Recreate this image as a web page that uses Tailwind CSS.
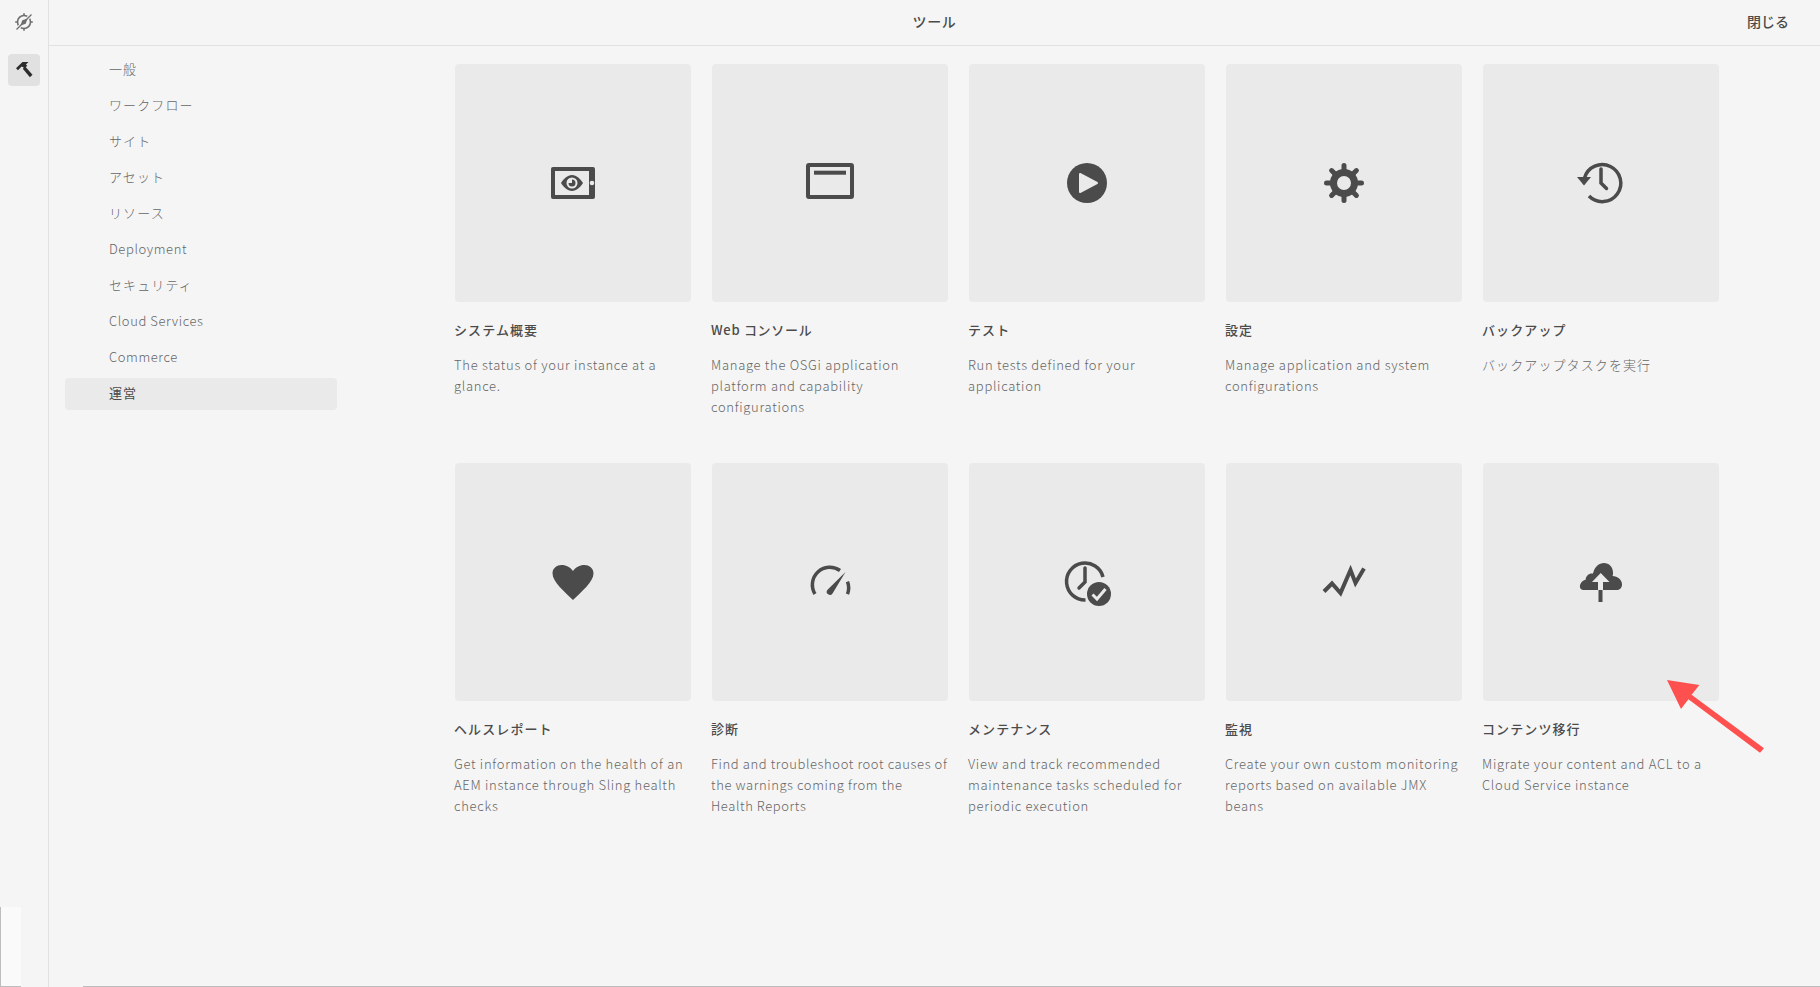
<!DOCTYPE html>
<html lang="ja">
  <head>
    <meta charset="UTF-8" />
    <script src="https://cdn.jsdelivr.net/npm/@tailwindcss/browser@4"></script>
    <title>ツール</title>
  </head>
  <body class="bg-[#f5f5f5] font-['Noto_Sans_CJK_JP',sans-serif] text-[#4b4b4b] overflow-hidden">
    <div class="relative flex h-[987px] w-[1820px] overflow-hidden">
      <!-- left rail -->
      <aside class="flex w-[49px] shrink-0 flex-col items-center border-r border-[#e1e1e1]">
        <div class="flex h-[46px] w-full items-center justify-center pb-[2px] text-[#6e6e6e]">
          <svg class="h-5 w-5" viewBox="0 0 20 20" fill="none" stroke="currentColor">
            <circle cx="10" cy="10" r="6.500" stroke-width="1.600" />
            <path d="M10 1.200v2M10 16.800v2M1.200 10h2M16.800 10h2" stroke-width="1.600" />
            <path d="M3.500 16.500L16.500 3.500" stroke="#f5f5f5" stroke-width="3.400" />
            <path d="M2.500 17.500L17.500 2.500" stroke-width="1.300" />
            <path d="M6.500 13.500l1.800-5.200 5.200-1.800-1.800 5.200z" fill="currentColor" stroke="none" />
          </svg>
        </div>
        <button class="mt-2 flex h-8 w-8 items-center justify-center rounded bg-[#e1e1e1] text-[#2c2c2c]">
          <svg class="h-[18px] w-[18px]" viewBox="0 0 18 18" fill="currentColor">
            <path d="M1 7.200L7.500 1h6l-2.600 2.500 1.300 1.300-2.700 2.700-1.300-1.300-1.600-.6-3.600 3.700z" />
            <path d="M7.800 7.800l2.400-2.400 7.300 8.300-2.600 2.500z" />
          </svg>
        </button>
      </aside>

      <div class="flex min-w-0 flex-1 flex-col">
        <!-- title bar -->
        <header class="grid h-[46px] shrink-0 grid-cols-[1fr_auto_1fr] items-center border-b border-[#e1e1e1] pb-[2px]">
          <span></span>
          <h1 class="text-[14px] font-medium tracking-[0.6px]">ツール</h1>
          <button class="justify-self-end pr-[31px] text-[14px] font-medium">閉じる</button>
        </header>

        <div class="flex min-h-0 flex-1">
          <!-- category nav -->
          <nav class="flex w-[406px] shrink-0 flex-col gap-1 pl-4 pt-2 text-[13px] font-light text-[#666666]">
            <a class="flex h-8 w-[272px] items-center rounded pb-[2px] pl-[44px] tracking-[1.1px]">一般</a>
            <a class="flex h-8 w-[272px] items-center rounded pb-[2px] pl-[44px] tracking-[1.1px]">ワークフロー</a>
            <a class="flex h-8 w-[272px] items-center rounded pb-[2px] pl-[44px] tracking-[1.1px]">サイト</a>
            <a class="flex h-8 w-[272px] items-center rounded pb-[2px] pl-[44px] tracking-[1.1px]">アセット</a>
            <a class="flex h-8 w-[272px] items-center rounded pb-[2px] pl-[44px] tracking-[1.1px]">リソース</a>
            <a class="flex h-8 w-[272px] items-center rounded pb-[2px] pl-[44px] tracking-[0.6px]">Deployment</a>
            <a class="flex h-8 w-[272px] items-center rounded pb-[2px] pl-[44px] tracking-[1.1px]">セキュリティ</a>
            <a class="flex h-8 w-[272px] items-center rounded pb-[2px] pl-[44px] tracking-[0.6px]">Cloud Services</a>
            <a class="flex h-8 w-[272px] items-center rounded pb-[2px] pl-[44px] tracking-[0.6px]">Commerce</a>
            <a class="flex h-8 w-[272px] items-center rounded bg-[#eaeaea] pb-[2px] pl-[44px] font-normal tracking-[1.1px] text-[#4b4b4b]">運営</a>
          </nav>

          <!-- tool cards -->
          <main class="grid grid-cols-[repeat(5,236px)] auto-rows-[399px] gap-x-[21px] pt-[18px]">
            <article>
              <div class="flex h-[238px] items-center justify-center rounded bg-[#eaeaea]">
                <svg class="h-12 w-12" viewBox="0 0 48 48">
                  <path fill="#4b4b4b" fill-rule="evenodd" d="M4 8h40a2 2 0 0 1 2 2v28a2 2 0 0 1-2 2H4a2 2 0 0 1-2-2V10a2 2 0 0 1 2-2zM6 12v24h34V12z" />
                  <circle cx="43" cy="24" r="2.300" fill="#eaeaea" />
                  <path fill="#4b4b4b" fill-rule="evenodd" d="M12 24c2.500-4 6.500-8 11-8s8.500 4 11 8c-2.500 4-6.500 8-11 8s-8.500-4-11-8zm11-5.500a5.500 5.500 0 1 0 0 11 5.500 5.500 0 0 0 0-11z" />
                  <path fill="#4b4b4b" d="M23 20.500a3.500 3.500 0 1 1-3.500 3.500H23z" />
                </svg>
              </div>
              <h2 class="-ml-px mt-[18px] text-[13px] leading-5 font-medium tracking-[1.1px]">システム概要</h2>
              <p class="-ml-px mt-[14px] text-[13px] leading-[21px] font-light tracking-[0.7px] text-[#666666]">The status of your instance at a glance.</p>
            </article>
            <article>
              <div class="flex h-[238px] items-center justify-center rounded bg-[#eaeaea]">
                <svg class="h-12 w-12" viewBox="0 0 48 48">
                  <rect x="2" y="6" width="44" height="32" rx="1" fill="none" stroke="#4b4b4b" stroke-width="4" />
                  <rect x="8" y="11.700" width="32" height="4" fill="#4b4b4b" />
                </svg>
              </div>
              <h2 class="-ml-px mt-[18px] text-[13px] leading-5 font-medium tracking-[0.7px]">Web コンソール</h2>
              <p class="-ml-px mt-[14px] text-[13px] leading-[21px] font-light tracking-[0.7px] text-[#666666]">Manage the OSGi application platform and capability configurations</p>
            </article>
            <article>
              <div class="flex h-[238px] items-center justify-center rounded bg-[#eaeaea]">
                <svg class="h-12 w-12" viewBox="0 0 48 48">
                  <circle cx="24" cy="24" r="20" fill="#4b4b4b" />
                  <path d="M17 15v18l17-9z" fill="#eaeaea" stroke="#eaeaea" stroke-width="2" stroke-linejoin="round" />
                </svg>
              </div>
              <h2 class="-ml-px mt-[18px] text-[13px] leading-5 font-medium tracking-[1.1px]">テスト</h2>
              <p class="-ml-px mt-[14px] text-[13px] leading-[21px] font-light tracking-[0.7px] text-[#666666]">Run tests defined for your application</p>
            </article>
            <article>
              <div class="flex h-[238px] items-center justify-center rounded bg-[#eaeaea]">
                <svg class="h-12 w-12" viewBox="0 0 48 48" fill="none" stroke="#4b4b4b">
                  <circle cx="24" cy="24" r="10.500" stroke-width="7" />
                  <path stroke-width="5" stroke-linecap="round" d="M24 6.500v5M24 36.500v5M6.500 24h5M36.500 24h5M11.600 11.600l3.500 3.500M32.900 32.900l3.500 3.500M11.600 36.400l3.500-3.500M32.900 15.100l3.500-3.500" />
                </svg>
              </div>
              <h2 class="-ml-px mt-[18px] text-[13px] leading-5 font-medium tracking-[1.1px]">設定</h2>
              <p class="-ml-px mt-[14px] text-[13px] leading-[21px] font-light tracking-[0.7px] text-[#666666]">Manage application and system configurations</p>
            </article>
            <article>
              <div class="flex h-[238px] items-center justify-center rounded bg-[#eaeaea]">
                <svg class="h-12 w-12" viewBox="0 0 48 48" fill="none" stroke="#4b4b4b" stroke-width="3.500">
                  <path d="M7.500 19A18.500 18.500 0 1 1 12 37" />
                  <path d="M0 18h14l-7 8.500z" fill="#4b4b4b" stroke="none" />
                  <path d="M24 10v14l5.500 5.500" stroke-linecap="round" />
                </svg>
              </div>
              <h2 class="-ml-px mt-[18px] text-[13px] leading-5 font-medium tracking-[1.1px]">バックアップ</h2>
              <p class="-ml-px mt-[14px] text-[13px] leading-[21px] font-light tracking-[1.1px] text-[#666666]">バックアップタスクを実行</p>
            </article>

            <article>
              <div class="flex h-[238px] items-center justify-center rounded bg-[#eaeaea]">
                <svg class="h-12 w-12" viewBox="0 0 48 48">
                  <path fill="#4b4b4b" d="M24 42C16 34 3.500 24 3.500 15.500 3.500 10 8 7 12.500 7 17.500 7 21.500 9.500 24 13 26.500 9.500 30.500 7 35.500 7 40 7 44.500 10 44.500 15.500 44.500 24 32 34 24 42z" />
                </svg>
              </div>
              <h2 class="-ml-px mt-[18px] text-[13px] leading-5 font-medium tracking-[1.1px]">ヘルスレポート</h2>
              <p class="-ml-px mt-[14px] text-[13px] leading-[21px] font-light tracking-[0.7px] text-[#666666]">Get information on the health of an AEM instance through Sling health checks</p>
            </article>
            <article>
              <div class="flex h-[238px] items-center justify-center rounded bg-[#eaeaea]">
                <svg class="h-12 w-12" viewBox="0 0 48 48" fill="none" stroke="#4b4b4b" stroke-width="3.500">
                  <path d="M9 36A17.500 17.500 0 0 1 34 12.500" />
                  <path d="M41.500 23.500A17.500 17.500 0 0 1 41.500 36" />
                  <path d="M39.500 14L26.500 35.500a3 3 0 0 1-5.200-3.500z" fill="#4b4b4b" stroke="none" />
                </svg>
              </div>
              <h2 class="-ml-px mt-[18px] text-[13px] leading-5 font-medium tracking-[1.1px]">診断</h2>
              <p class="-ml-px mt-[14px] whitespace-nowrap text-[13px] leading-[21px] font-light tracking-[0.6px] text-[#666666]">Find and troubleshoot root causes of<br />the warnings coming from the<br />Health Reports</p>
            </article>
            <article>
              <div class="flex h-[238px] items-center justify-center rounded bg-[#eaeaea]">
                <svg class="h-12 w-12" viewBox="0 0 48 48" fill="none" stroke="#4b4b4b" stroke-width="3.500">
                  <path d="M40 19A18.500 18.500 0 1 0 22.500 42" />
                  <path d="M22 10v14l-6 6" stroke-linecap="round" />
                  <circle cx="36" cy="36" r="12" fill="#4b4b4b" stroke="none" />
                  <path d="M29.500 36.500l4.500 4.500 8.500-10" stroke="#eaeaea" stroke-width="3" />
                </svg>
              </div>
              <h2 class="-ml-px mt-[18px] text-[13px] leading-5 font-medium tracking-[1.1px]">メンテナンス</h2>
              <p class="-ml-px mt-[14px] text-[13px] leading-[21px] font-light tracking-[0.7px] text-[#666666]">View and track recommended maintenance tasks scheduled for periodic execution</p>
            </article>
            <article>
              <div class="flex h-[238px] items-center justify-center rounded bg-[#eaeaea]">
                <svg class="h-12 w-12" viewBox="0 0 48 48" fill="none" stroke="#4b4b4b" stroke-width="4">
                  <path d="M4 33.500l8-8 8.500 9.500 10-23 5 13 8.500-14.500" />
                </svg>
              </div>
              <h2 class="-ml-px mt-[18px] text-[13px] leading-5 font-medium tracking-[1.1px]">監視</h2>
              <p class="-ml-px mt-[14px] text-[13px] leading-[21px] font-light tracking-[0.7px] text-[#666666]">Create your own custom monitoring reports based on available JMX beans</p>
            </article>
            <article>
              <div class="flex h-[238px] items-center justify-center rounded bg-[#eaeaea]">
                <svg class="h-12 w-12" viewBox="0 0 48 48">
                  <path fill="#4b4b4b" d="M6 32a3.500 3.500 0 0 1-3-4.500c.5-3 3-5.500 5.500-5.500C9 17.500 12 15 16 15.500 17.500 9 22 5 27 5c5 0 9 4 9 9.500 0 1.500 0 2.500-.5 3.500 5 .5 9.500 3.500 9.500 8.500 0 3-2 5.500-5 5.500z" />
                  <path fill="#eaeaea" d="M23.700 15L32.500 24H26v8h-5v-8h-6z" />
                  <rect x="21.500" y="32" width="4" height="12" fill="#4b4b4b" />
                </svg>
              </div>
              <h2 class="-ml-px mt-[18px] text-[13px] leading-5 font-medium tracking-[1.1px]">コンテンツ移行</h2>
              <p class="-ml-px mt-[14px] text-[13px] leading-[21px] font-light tracking-[0.7px] text-[#666666]">Migrate your content and ACL to a Cloud Service instance</p>
            </article>
          </main>
        </div>
      </div>

      <!-- annotation arrow -->
      <svg class="absolute left-[1660px] top-[672px] h-[90px] w-[110px]" viewBox="1660 672 110 90">
        <path d="M1667 680L1699.400 685 1691.600 694.800 1764 748.300 1760 752.700 1688.400 699.200 1681 709z" fill="#ff5050" />
      </svg>

      <!-- leftover window edges in the capture -->
      <div class="absolute bottom-0 left-0 h-20 w-[21px] border-l border-b border-[#bdbdbd] bg-[#fafafa]"></div>
      <div class="absolute bottom-0 left-[83px] right-0 h-px bg-[#bdbdbd]"></div>
    </div>
  </body>
</html>
